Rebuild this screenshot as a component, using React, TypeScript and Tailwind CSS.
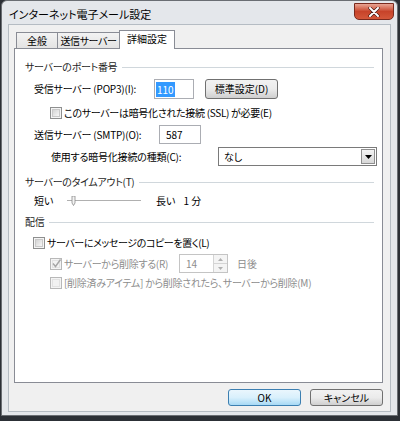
import React from "react";

const F = "font-['Noto_Sans_CJK_JP','Noto_Sans',sans-serif] [font-feature-settings:'palt'] text-[10px] leading-[14px]";

function Check({ checked = false, disabled = false }: { checked?: boolean; disabled?: boolean }) {
  return (
    <span
      className={
        "w-[12px] h-[12px] shrink-0 border flex items-center justify-center " +
        (disabled ? "border-[#b8b8b8] bg-[#f4f4f4]" : "border-[#8e8f8f] bg-[#f4f4f4]")
      }
    >
      <span
        className={
          "w-[8px] h-[8px] border flex items-center justify-center " +
          (disabled ? "border-[#e2e2e2] bg-[#f2f2f2]" : "border-[#c9c9c9] bg-gradient-to-br from-[#d4d4d4] to-[#f7f7f7]")
        }
      >
        {checked && (
          <svg width="9" height="9" viewBox="0 0 9 9" className="overflow-visible">
            <path d="M1 4.5 L3.5 7.5 L8.5 0.5" fill="none" stroke="#a5a5a5" strokeWidth="1.4" />
          </svg>
        )}
      </span>
    </span>
  );
}

function Header({ text, mt }: { text: string; mt: string }) {
  return (
    <div className={"flex items-center h-[14px] pl-[10px] pr-[8px] " + mt}>
      <span className="text-[#1e1e1e] whitespace-nowrap tracking-[-0.3px]">{text}</span>
      <div className="flex-1 ml-[5px] border-t border-[#d0d7dc]" />
    </div>
  );
}

export default function App() {
  return (
    <div className={"w-[400px] h-[421px] bg-[#2c3036] pl-[1px] overflow-hidden " + F}>
      <div className="w-[397px] h-[416px] bg-[#e4e7eb] border border-[#6a6e73] rounded-t-[6px] flex flex-col">
        {/* title bar */}
        <div className="h-[23px] flex items-start justify-between pl-[7px] pr-[3px] shrink-0">
          <span className="mt-[6px] text-[11px] leading-[15px] text-black whitespace-nowrap">インターネット電子メール設定</span>
          <div className="mt-[2px] w-[40px] h-[17px] rounded-b-[5px] border border-[#7a2a1e] bg-gradient-to-b from-[#e8a493] via-[#c7432a] to-[#d3573a] flex items-center justify-center">
            <svg width="12" height="10" viewBox="0 0 12 10">
              <path d="M2 1 L10 9 M10 1 L2 9" stroke="#3b1410" strokeWidth="3.2" strokeLinecap="round" />
              <path d="M2 1 L10 9 M10 1 L2 9" stroke="#ffffff" strokeWidth="2" strokeLinecap="round" />
            </svg>
          </div>
        </div>
        {/* client area */}
        <div className="mx-[6px] mb-[3px] flex-1 bg-[#f0f0f0] border border-[#b5bcc3] flex flex-col pl-[5px] pr-[7px]">
          {/* tabs */}
          <div className="flex items-end pt-[4px] pl-[2px] h-[23px] shrink-0 relative z-10">
            <div className="h-[16px] w-[42px] flex items-center justify-center border border-[#898c95] border-b-0 bg-gradient-to-b from-[#f3f3f3] to-[#e3e3e3] text-black">全般</div>
            <div className="h-[16px] w-[63px] ml-[-1px] flex items-center justify-center border border-[#898c95] border-b-0 bg-gradient-to-b from-[#f3f3f3] to-[#e3e3e3] text-black whitespace-nowrap tracking-[-0.4px]">送信サーバー</div>
            <div className="h-[19px] w-[56px] ml-[-1px] mb-[-1px] flex items-start justify-center pt-[1px] border border-[#898c95] border-b-0 bg-white text-black">詳細設定</div>
          </div>
          {/* panel */}
          <div className="h-[335px] bg-white border border-[#898c95] flex flex-col pt-[11px] shrink-0">
            <Header text="サーバーのポート番号" mt="" />
            <div className="flex items-center h-[20px] mt-[5px] pl-[19px]">
              <span className="w-[120px] text-black whitespace-nowrap tracking-[-0.2px]">受信サーバー (POP3)(I):</span>
              <div className="w-[40px] h-[20px] border border-[#abadb3] flex items-center pl-[1px]">
                <span className="bg-[#3399ff] text-white px-[1px] leading-[15px]">110</span>
              </div>
              <div className="ml-[11px] w-[73px] h-[20px] rounded-[3px] border border-[#707070] bg-gradient-to-b from-[#f2f2f2] via-[#ebebeb] to-[#cfcfcf] flex items-center justify-center text-black">標準設定(D)</div>
            </div>
            <div className="flex items-center h-[14px] mt-[7px] pl-[35px]">
              <Check />
              <span className="ml-[2px] text-black whitespace-nowrap tracking-[-0.3px]">このサーバーは暗号化された接続 (SSL) が必要(E)</span>
            </div>
            <div className="flex items-center h-[19px] mt-[5px] pl-[19px]">
              <span className="w-[125px] text-black whitespace-nowrap tracking-[-0.2px]">送信サーバー (SMTP)(O):</span>
              <div className="w-[42px] h-[19px] border border-[#abadb3] flex items-center pl-[6px] text-black">587</div>
            </div>
            <div className="flex items-center h-[19px] mt-[3px] pl-[36px]">
              <span className="w-[167px] text-black whitespace-nowrap tracking-[-0.2px]">使用する暗号化接続の種類(C):</span>
              <div className="w-[159px] h-[19px] border border-[#7a7a7a] flex items-center pl-[5px] pr-[1px] text-black">
                <span className="flex-1">なし</span>
                <div className="w-[14px] h-[15px] border border-[#8f8f8f] bg-gradient-to-b from-[#f4f4f4] to-[#d8d8d8] flex items-center justify-center">
                  <svg width="7" height="4" viewBox="0 0 7 4">
                    <path d="M0 0 H7 L3.5 4 Z" fill="#000" />
                  </svg>
                </div>
              </div>
            </div>
            <Header text="サーバーのタイムアウト(T)" mt="mt-[9px]" />
            <div className="flex items-center h-[14px] mt-[5px] pl-[19px]">
              <span className="w-[33px] text-black">短い</span>
              <div className="relative w-[74px] h-[10px]">
                <div className="absolute left-0 right-0 top-[4px] h-[2px] border-t border-[#b0b0b0] border-b border-b-[#ffffff] bg-[#e6e6e6]" />
                <svg width="8" height="10" viewBox="0 0 8 10" className="absolute left-[3px] top-[0px]">
                  <path d="M2 0 H5 V7 L3.5 9.5 L2 7 Z" fill="#f3f3f3" stroke="#8a8a8a" strokeWidth="0.8" />
                </svg>
              </div>
              <span className="ml-[15px] text-black">長い</span>
              <span className="ml-[8px] text-black whitespace-nowrap">1 分</span>
            </div>
            <Header text="配信" mt="mt-[7px]" />
            <div className="flex items-center h-[14px] mt-[7px] pl-[18px]">
              <Check />
              <span className="ml-[2px] text-black whitespace-nowrap tracking-[-0.4px]">サーバーにメッセージのコピーを置く(L)</span>
            </div>
            <div className="flex items-center h-[19px] mt-[4px] pl-[35px]">
              <Check checked disabled />
              <span className="ml-[2px] w-[115px] text-[#8d8d8d] whitespace-nowrap tracking-[-0.3px]">サーバーから削除する(R)</span>
              <div className="w-[49px] h-[19px] border border-[#c4c4c4] flex items-center text-[#8d8d8d]">
                <span className="flex-1 pl-[6px]">14</span>
                <div className="w-[14px] h-full flex flex-col">
                  <div className="flex-1 border-l border-b border-[#d4d4d4] bg-[#f4f4f4] flex items-center justify-center">
                    <svg width="5" height="3" viewBox="0 0 5 3"><path d="M0 3 H5 L2.5 0 Z" fill="#b0b0b0" /></svg>
                  </div>
                  <div className="flex-1 border-l border-[#d4d4d4] bg-[#f4f4f4] flex items-center justify-center">
                    <svg width="5" height="3" viewBox="0 0 5 3"><path d="M0 0 H5 L2.5 3 Z" fill="#b0b0b0" /></svg>
                  </div>
                </div>
              </div>
              <span className="ml-[9px] text-[#8d8d8d]">日後</span>
            </div>
            <div className="flex items-center h-[14px] mt-[3px] pl-[35px]">
              <Check disabled />
              <span className="ml-[2px] text-[#8d8d8d] whitespace-nowrap tracking-[-0.3px]">[削除済みアイテム] から削除されたら、サーバーから削除(M)</span>
            </div>
          </div>
          {/* buttons */}
          <div className="flex justify-end items-center mt-[6px]">
            <div className="w-[73px] h-[17px] rounded-[3px] border border-[#3c7fb1] bg-gradient-to-b from-[#eaf6fd] via-[#d9f0fc] to-[#a7d9f5] flex items-center justify-center text-black">OK</div>
            <div className="ml-[9px] w-[73px] h-[17px] rounded-[3px] border border-[#707070] bg-gradient-to-b from-[#f2f2f2] via-[#ebebeb] to-[#cfcfcf] flex items-center justify-center text-black">キャンセル</div>
          </div>
        </div>
      </div>
    </div>
  );
}
